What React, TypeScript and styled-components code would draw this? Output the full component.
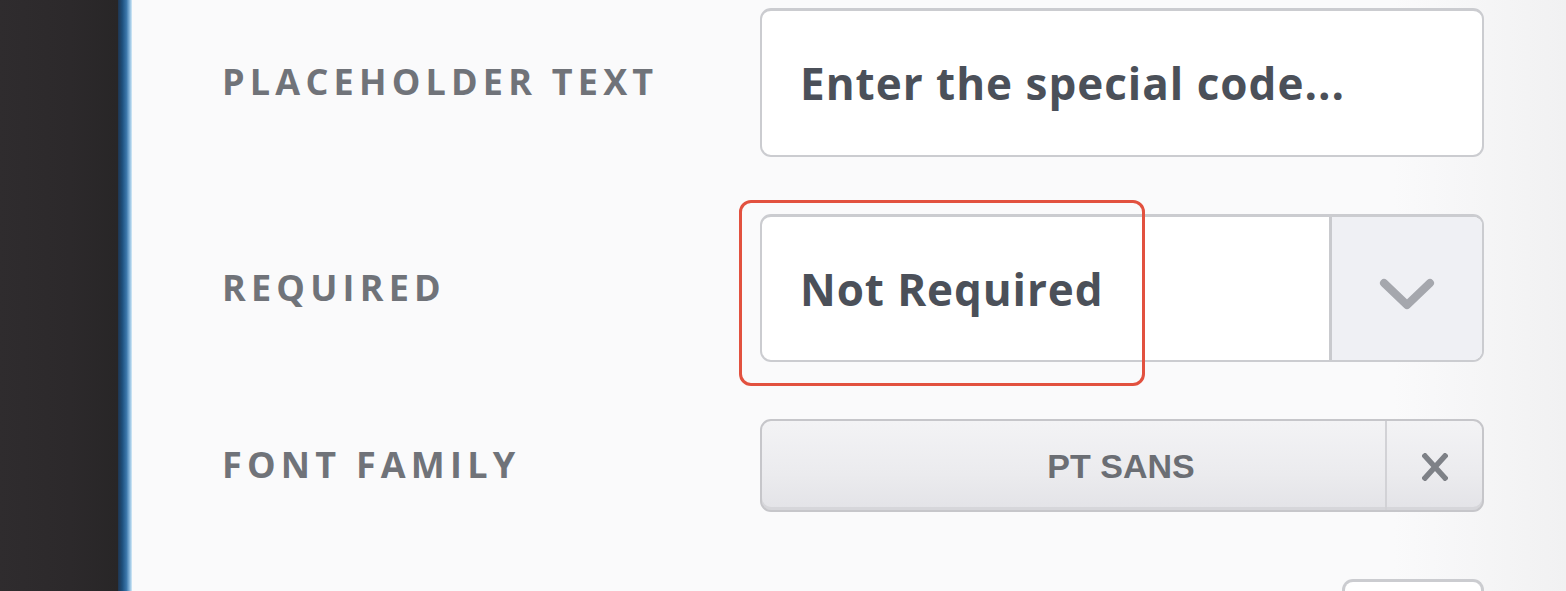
import React from 'react';
import styled, { createGlobalStyle } from 'styled-components';

const GlobalStyle = createGlobalStyle`
  html, body {
    margin: 0;
    padding: 0;
    height: 100%;
    overflow: hidden;
  }
  body {
    font-family: 'Open Sans', 'Lato', sans-serif;
  }
`;

const Page = styled.div`
  display: flex;
  height: 591px;
  width: 1566px;
  overflow: hidden;
`;

const Sidebar = styled.div`
  width: 118px;
  flex-shrink: 0;
  background: linear-gradient(90deg, #2f2c2e 0%, #2c292b 60%, #282627 100%);
`;

const Accent = styled.div`
  width: 14px;
  flex-shrink: 0;
  background: linear-gradient(90deg, #1f3550 0%, #1d4f7c 30%, #3a76aa 60%, #8fbde0 85%, #d6ebf7 100%);
`;

const Panel = styled.div`
  flex: 1;
  background: linear-gradient(90deg, #fafafb 0%, #fafafb 88%, #f1f1f2 100%);
  padding: 8px 82px 0 90px;
  display: grid;
  grid-template-columns: 538px 724px;
  grid-auto-rows: min-content;
  row-gap: 57px;
  align-items: center;
`;

const Label = styled.div`
  font-family: 'Open Sans', sans-serif;
  font-weight: 700;
  font-size: 36px;
  letter-spacing: 5.2px;
  color: #707379;
  text-transform: uppercase;
  padding-bottom: 2px;
`;

const TextBox = styled.div`
  height: 149px;
  box-sizing: border-box;
  border: 2px solid #cbccd0;
  border-top-width: 3px;
  border-radius: 11px;
  background: #ffffff;
  display: flex;
  align-items: center;
  padding: 0 38px;
  font-family: 'Open Sans', sans-serif;
  font-weight: 700;
  font-size: 44px;
  letter-spacing: 1px;
  color: #4b5059;
`;

const SelectWrap = styled.div`
  position: relative;
`;

const Select = styled.div`
  height: 148px;
  box-sizing: border-box;
  border: 2px solid #cbccd0;
  border-top-width: 3px;
  border-radius: 11px;
  background: #ffffff;
  display: flex;
  overflow: hidden;
`;

const SelectValue = styled.div`
  flex: 1;
  display: flex;
  align-items: center;
  padding: 0 38px;
  font-family: 'Open Sans', sans-serif;
  font-weight: 700;
  font-size: 44px;
  letter-spacing: 0.9px;
  color: #4b5059;
`;

const SelectToggle = styled.div`
  width: 150px;
  border-left: 3px solid #c9cace;
  background: #eff0f4;
  display: flex;
  align-items: center;
  justify-content: center;
  padding-top: 10px;
`;

const Highlight = styled.div`
  position: absolute;
  left: -21px;
  top: -14px;
  width: 406px;
  height: 186px;
  box-sizing: border-box;
  border: 3px solid #e2513f;
  border-radius: 12px;
  pointer-events: none;
`;

const Chip = styled.div`
  height: 93px;
  box-sizing: border-box;
  border: 2px solid #c6c6ca;
  border-radius: 11px;
  background: linear-gradient(180deg, #f3f3f5 0%, #ebebee 60%, #e3e3e7 100%);
  box-shadow: inset 0 -3px 0 #d6d6da;
  display: flex;
`;

const ChipText = styled.div`
  flex: 1;
  display: flex;
  align-items: center;
  justify-content: center;
  padding-left: 95px;
  font-family: 'Liberation Sans', sans-serif;
  font-weight: 700;
  font-size: 34px;
  color: #6b6e74;
  padding-top: 2px;
`;

const ChipRemove = styled.div`
  width: 95px;
  border-left: 2px solid #d2d2d6;
  display: flex;
  align-items: center;
  justify-content: center;
  padding-top: 2px;
`;

const NextControl = styled.div`
  grid-column: 2;
  justify-self: end;
  width: 142px;
  height: 60px;
  margin-top: 10px;
  box-sizing: border-box;
  border: 3px solid #cbccd0;
  border-bottom: none;
  border-radius: 11px 11px 0 0;
  background: #ffffff;
`;

const Chevron = () => (
  <svg width="56" height="34" viewBox="0 0 56 34">
    <path d="M5 6 L28 28 L51 6" fill="none" stroke="#a5a7ad" strokeWidth="8" strokeLinecap="round" strokeLinejoin="round" />
  </svg>
);

const Cross = () => (
  <svg width="26" height="28" viewBox="0 0 26 28">
    <path d="M3 3 L23 25 M23 3 L3 25" stroke="#7e8187" strokeWidth="5.5" strokeLinecap="square" />
  </svg>
);

export default function App() {
  return (
    <>
      <GlobalStyle />
      <Page>
        <Sidebar />
        <Accent />
        <Panel>
          <Label>Placeholder Text</Label>
          <TextBox>Enter the special code...</TextBox>

          <Label>Required</Label>
          <SelectWrap>
            <Select>
              <SelectValue>Not Required</SelectValue>
              <SelectToggle>
                <Chevron />
              </SelectToggle>
            </Select>
            <Highlight />
          </SelectWrap>

          <Label>Font Family</Label>
          <Chip>
            <ChipText>PT SANS</ChipText>
            <ChipRemove>
              <Cross />
            </ChipRemove>
          </Chip>

          <NextControl />
        </Panel>
      </Page>
    </>
  );
}
